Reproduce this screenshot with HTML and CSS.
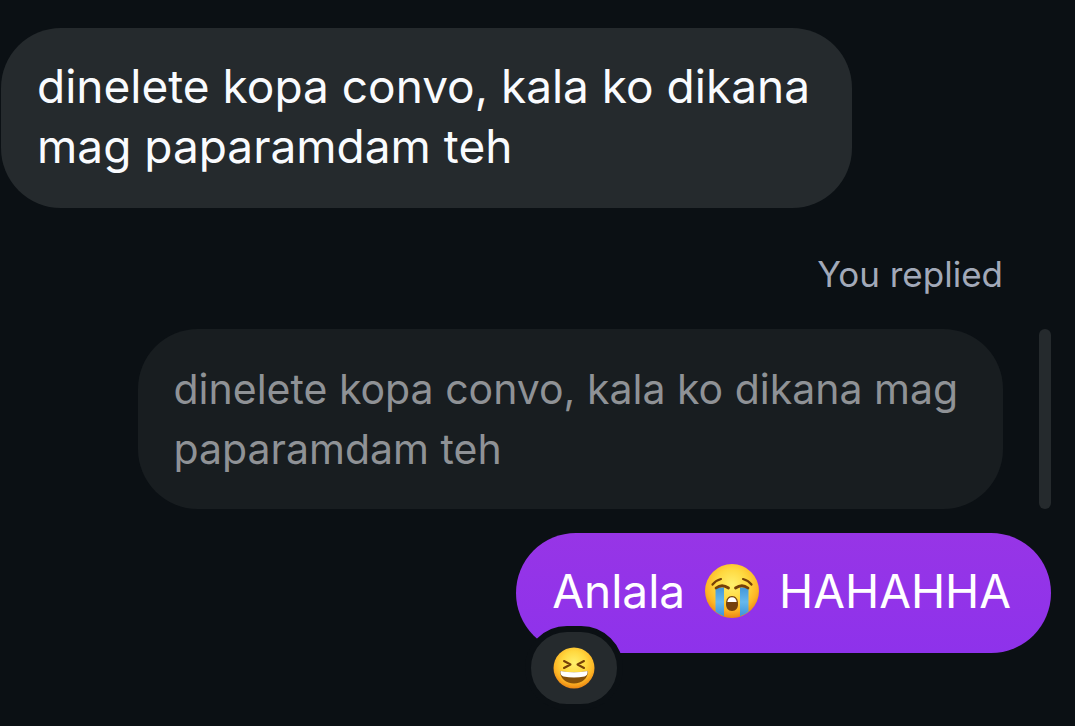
FILE: index.html
```html
<!DOCTYPE html>
<html lang="tl">
<head>
    <meta charset="UTF-8">
    <meta name="viewport" content="width=device-width, initial-scale=1.0">
    <title>Chat</title>
    <link rel="stylesheet" href="styles.css">
</head>
<body>
    <main class="chat">
        <p class="bubble received">dinelete kopa convo, kala ko dikana mag paparamdam teh</p>
        <p class="reply-label">You replied</p>
        <div class="quote">
            <blockquote class="quote-text">dinelete kopa convo, kala ko dikana mag paparamdam teh</blockquote>
            <div class="quote-bar"></div>
        </div>
        <div class="sent-message">
            <p class="bubble sent">Anlala
                <svg class="emoji" viewBox="0 0 56 56" role="img" aria-label="loudly crying face">
                    <defs>
                        <radialGradient id="face" cx="50%" cy="38%" r="64%">
                            <stop offset="0" stop-color="#fff06e"/>
                            <stop offset="0.45" stop-color="#ffd83f"/>
                            <stop offset="0.75" stop-color="#fdb525"/>
                            <stop offset="1" stop-color="#e97e10"/>
                        </radialGradient>
                        <linearGradient id="tear" x1="0" y1="0" x2="0" y2="1">
                            <stop offset="0" stop-color="#4397d8"/>
                            <stop offset="0.5" stop-color="#66b8ee"/>
                            <stop offset="1" stop-color="#3c93da"/>
                        </linearGradient>
                    </defs>
                    <circle cx="28" cy="28" r="27" fill="url(#face)"/>
                    <!-- tears -->
                    <path d="M11.500 24.500h8.500v28.800q-4.500-1.500-8.500-4.600z" fill="url(#tear)"/>
                    <path d="M36 24.500h8.500v24.200q-4 3.100-8.500 4.600z" fill="url(#tear)"/>
                    <!-- brows -->
                    <path d="M8.500 21.500q3-4 8.500-5.500M39 16q5.500 1.500 8.500 5.500" fill="none" stroke="#764008" stroke-width="2.200" stroke-linecap="round"/>
                    <!-- closed eyes -->
                    <path d="M12 25q6-4.500 12.500 0M31.500 25q6.500-4.500 12.500 0" fill="none" stroke="#764008" stroke-width="2.800" stroke-linecap="round"/>
                    <!-- mouth -->
                    <path d="M28 33c4 0 6 3 6 8 0 4-2 7-6 7s-6-3-6-7c0-5 2-8 6-8z" fill="#75400d"/>
                    <path d="M23.300 39c.4-3.300 2-4.800 4.700-4.800s4.300 1.500 4.700 4.800z" fill="#fff"/>
                </svg>
                HAHAHHA</p>
            <button class="reaction" type="button" aria-label="Reactions">
                <svg class="reaction-emoji" viewBox="0 0 42 42" aria-hidden="true">
                    <circle cx="21" cy="21" r="20.500" fill="url(#face)"/>
                    <path d="M11 14l6.500 3.500-6.500 3.500M31 14l-6.500 3.500 6.500 3.500" fill="none" stroke="#764008" stroke-width="2" stroke-linecap="round" stroke-linejoin="round"/>
                    <path d="M7 24q14 2.500 28 0c0 7.500-6 12.500-14 12.500S7 31.500 7 24z" fill="#84500a"/>
                    <path d="M7.500 24q13.500 2.500 27 0c.5 3-1 5-3 5.500q-10.500 1.800-21 0c-2-.5-3.500-2.500-3-5.500z" fill="#fff"/>
                </svg>
            </button>
        </div>
    </main>
</body>
</html>
```

FILE: styles.css
```css
* {
    box-sizing: border-box;
    margin: 0;
    padding: 0;
}

body {
    background-color: #0b1014;
    color: #f9fbfe;
    font-family: Inter, "Liberation Sans", sans-serif;
}

.chat {
    display: flex;
    flex-direction: column;
    align-items: flex-start;
    padding: 28px 24px 72px 1px;
}

.bubble {
    padding: 28px 36px 32px;
    border-radius: 60px;
    font-size: 46px;
    line-height: 60px;
}

.received {
    max-width: 81%;
    background-color: #252a2d;
}

.reply-label {
    align-self: flex-end;
    margin: 42px 48px 31px 0;
    color: #a2a9b9;
    font-size: 35px;
    line-height: 48px;
}

.quote {
    display: flex;
    align-self: flex-end;
    gap: 36px;
    max-width: 87%;
}

.quote-text {
    padding: 30px 36px;
    border-radius: 60px;
    background-color: #181d20;
    color: #8f9296;
    font-size: 41px;
    line-height: 60px;
}

.quote-bar {
    flex: 0 0 12px;
    border-radius: 6px;
    background-color: #252a2d;
}

.sent-message {
    position: relative;
    align-self: flex-end;
    margin-top: 24px;
}

.sent {
    padding-right: 40px;
    background-image: linear-gradient(#9735e6, #8e32eb);
    color: #fff;
}

.emoji {
    width: 56px;
    height: 56px;
    margin: 0 6px;
    vertical-align: -11px;
}

/* Sits over the lower left corner of the bubble */
.reaction {
    position: absolute;
    left: 9px;
    bottom: -57px;
    display: flex;
    padding: 15px 22px;
    border: 6px solid #0b1014;
    border-radius: 42px;
    background-color: #252a2d;
    cursor: pointer;
}

.reaction-emoji {
    width: 42px;
    height: 42px;
}
```
